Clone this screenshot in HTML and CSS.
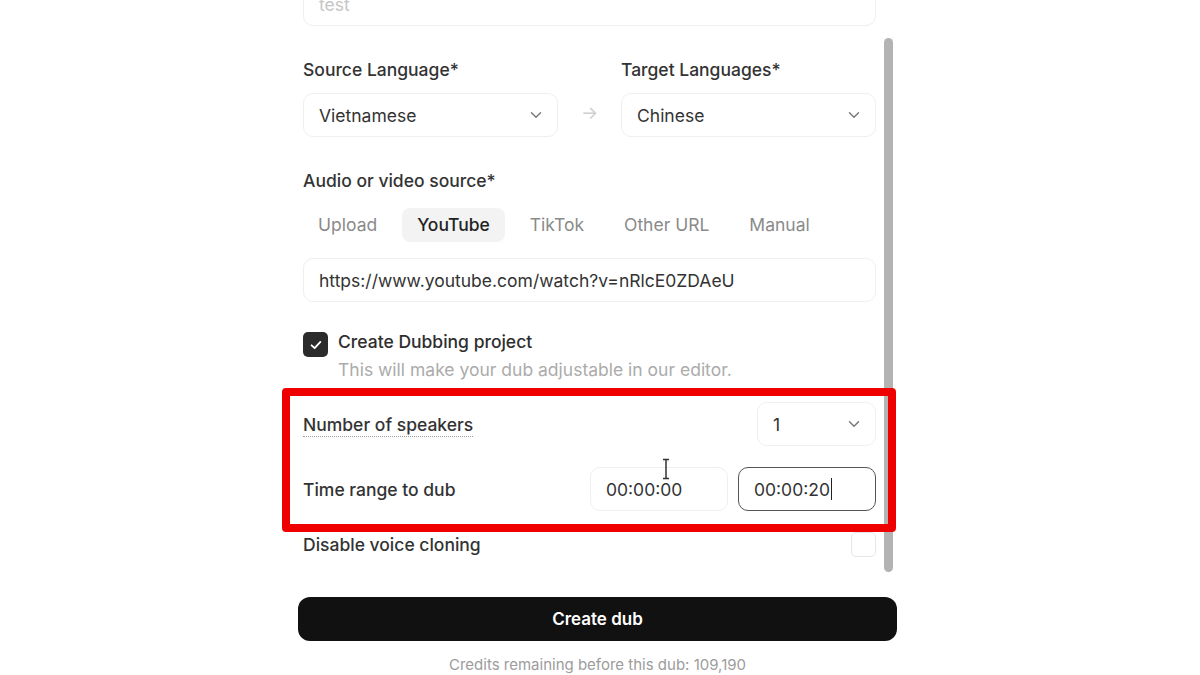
FILE: index.html
```html
<!DOCTYPE html>
<html>
<head>
<meta charset="utf-8">
<link rel="stylesheet" href="styles.css">
</head>
<body>
<div class="wrap">
  <div class="panel">
    <div class="content">
      <div class="field input placeholder">test</div>

      <div class="lang-row">
        <div class="lang-col">
          <div class="label">Source Language*</div>
          <div class="field select"><span>Vietnamese</span><svg class="chev" viewBox="0 0 12 8" width="12" height="8"><path d="M1.5 1.8 6 6.2 10.5 1.8" fill="none" stroke="#777" stroke-width="1.4" stroke-linecap="round" stroke-linejoin="round"/></svg></div>
        </div>
        <div class="arrow">→</div>
        <div class="lang-col">
          <div class="label">Target Languages*</div>
          <div class="field select"><span>Chinese</span><svg class="chev" viewBox="0 0 12 8" width="12" height="8"><path d="M1.5 1.8 6 6.2 10.5 1.8" fill="none" stroke="#777" stroke-width="1.4" stroke-linecap="round" stroke-linejoin="round"/></svg></div>
        </div>
      </div>

      <div class="label src-label">Audio or video source*</div>
      <div class="tabs">
        <div class="tab">Upload</div>
        <div class="tab active">YouTube</div>
        <div class="tab">TikTok</div>
        <div class="tab">Other URL</div>
        <div class="tab">Manual</div>
      </div>
      <div class="field input url">https://www.youtube.com/watch?v=nRlcE0ZDAeU</div>

      <div class="check-row">
        <div class="checkbox checked"><svg viewBox="0 0 16 16" width="16" height="16"><path d="M3.6 8.3 6.6 11.2 12.4 4.9" fill="none" stroke="#fff" stroke-width="1.8" stroke-linecap="round" stroke-linejoin="round"/></svg></div>
        <div class="check-text">
          <div class="check-title">Create Dubbing project</div>
          <div class="check-sub">This will make your dub adjustable in our editor.</div>
        </div>
      </div>

      <div class="opt-row speakers">
        <div class="opt-label dotted">Number of speakers</div>
        <div class="field select small"><span>1</span><svg class="chev" viewBox="0 0 12 8" width="12" height="8"><path d="M1.5 1.8 6 6.2 10.5 1.8" fill="none" stroke="#777" stroke-width="1.4" stroke-linecap="round" stroke-linejoin="round"/></svg></div>
      </div>

      <div class="opt-row time">
        <div class="opt-label">Time range to dub</div>
        <div class="times">
          <div class="field input time-in">00:00:00</div>
          <div class="field input time-in focus">00:00:20<span class="caret"></span></div>
        </div>
      </div>

      <div class="opt-row voice">
        <div class="opt-label">Disable voice cloning</div>
        <div class="checkbox empty"></div>
      </div>
    </div>
    <div class="scrolltrack"><div class="thumb"></div></div>
  </div>

  <button class="create">Create dub</button>
  <div class="credits">Credits remaining before this dub: 109,190</div>

  <div class="highlight"></div>
  <svg class="ibeam" viewBox="0 0 10 22" width="10" height="22"><path d="M2 1.5h6M5 1.5v19M2 20.5h6" fill="none" stroke="#333" stroke-width="1.5"/></svg>
</div>
</body>
</html>
```

FILE: styles.css
```css
* { box-sizing: border-box; }
html, body { margin: 0; padding: 0; background: #fff; }
body {
  font-family: Inter, "Noto Sans", "Liberation Sans", sans-serif;
  color: #2e2e2e;
  width: 1200px;
  height: 675px;
  overflow: hidden;
}
.wrap {
  position: relative;
  width: 599px;
  margin-left: 298px;
  margin-top: -18px;
}
.panel {
  display: flex;
  padding-left: 5px;
}
.content {
  width: 573px;
  display: flex;
  flex-direction: column;
  padding-bottom: 18px;
}
.scrolltrack {
  width: 9px;
  margin-left: 8px;
  padding-top: 56px;
  padding-bottom: 3px;
  display: flex;
  flex-direction: column;
}
.thumb {
  flex: 1;
  background: #b3b3b3;
  border-radius: 5px;
}
.field {
  border: 1px solid #efefef;
  border-radius: 10px;
  height: 44px;
  display: flex;
  align-items: center;
  padding: 0 15px;
  font-size: 17.5px;
  color: #333;
  background: #fff;
}
.placeholder { color: #c6c6c6; }
.select { justify-content: space-between; height: 44px; }
.chev { display: block; margin-right: 0; }
.label {
  font-size: 17.5px;
  font-weight: 500;
  color: #333;
  line-height: 24px;
}
.lang-row {
  display: flex;
  align-items: flex-end;
  margin-top: 32px;
}
.lang-col {
  width: 255px;
  display: flex;
  flex-direction: column;
  gap: 11px;
}
.arrow {
  width: 63px;
  text-align: center;
  height: 44px;
  line-height: 40px;
  color: #cfcfcf;
  font-size: 18px;
}
.src-label { margin-top: 32px; }
.tabs {
  display: flex;
  margin-top: 15px;
  height: 34px;
}
.tab {
  font-size: 17.5px;
  color: #8a8a8a;
  line-height: 34px;
  padding: 0 15px;
  border-radius: 8px;
  margin-right: 10px;
}
.tab.active {
  background: #f3f3f3;
  color: #222;
  font-weight: 500;
}
.url { margin-top: 16px; }
.check-row {
  display: flex;
  margin-top: 30px;
  gap: 10px;
}
.checkbox {
  width: 25px;
  height: 25px;
  border-radius: 5px;
  flex: none;
  display: flex;
  align-items: center;
  justify-content: center;
}
.checkbox.checked { background: #2b2b2b; }
.checkbox.empty { border: 1px solid #e6e6e6; }
.check-text { margin-top: -2px; }
.check-title { font-size: 17.5px; font-weight: 500; color: #2e2e2e; line-height: 24px; }
.check-sub { font-size: 17.5px; color: #ababab; line-height: 24px; margin-top: 4px; }
.opt-row {
  display: flex;
  justify-content: space-between;
  align-items: center;
}
.speakers { margin-top: 20px; }
.time { margin-top: 21px; }
.voice { margin-top: 21px; }
.opt-label { font-size: 17.5px; font-weight: 500; color: #333; }
.dotted {
  border-bottom: 1.5px dotted #9a9a9a;
  line-height: 22px;
  margin-top: 2px;
}
.small { width: 119px; }
.times { display: flex; gap: 10px; }
.time-in { width: 138px; height: 44px; }
.time-in.focus { border: 1.5px solid #555; }
.caret {
  display: inline-block;
  width: 1.5px;
  height: 22px;
  background: #222;
  margin-left: 1px;
}
.create {
  display: block;
  width: 599px;
  height: 44px;
  margin-top: 22px;
  border: none;
  border-radius: 12px;
  background: #111;
  color: #fff;
  font-family: Inter, "Noto Sans", sans-serif;
  font-size: 17px;
  font-weight: 600;
}
.credits {
  text-align: center;
  font-size: 15px;
  color: #9c9c9c;
  margin-top: 14px;
  line-height: 20px;
}
.highlight {
  position: absolute;
  left: -16px;
  top: 406px;
  width: 614px;
  height: 144px;
  border: 8px solid #ee0000;
  border-radius: 4px;
  pointer-events: none;
}
.ibeam {
  position: absolute;
  left: 363px;
  top: 476px;
}
```
